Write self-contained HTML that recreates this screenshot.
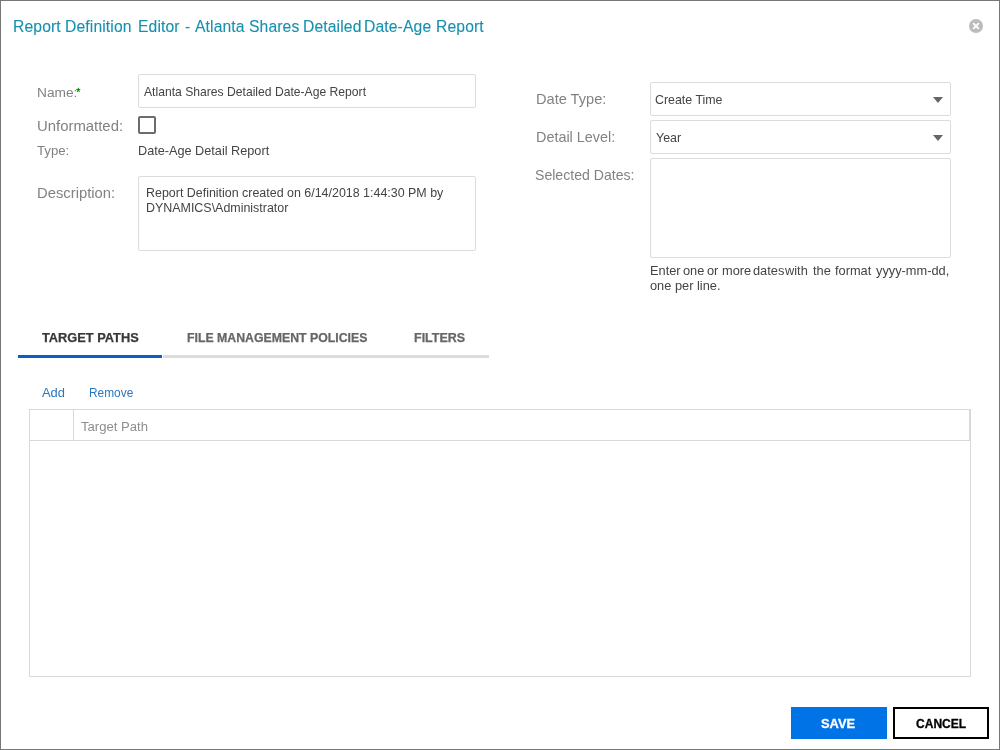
<!DOCTYPE html>
<html>
<head>
<meta charset="utf-8">
<style>
html,body{margin:0;padding:0;background:#fff;}
body{width:1000px;height:750px;position:relative;overflow:hidden;font-family:"Liberation Sans",sans-serif;-webkit-font-smoothing:antialiased;}
.frame{position:absolute;left:0;top:0;width:998px;height:748px;border:1px solid #777;}
.t{position:absolute;white-space:nowrap;line-height:1;will-change:transform;}
.box{position:absolute;box-sizing:border-box;border:1px solid #dcdcdc;border-radius:2px;background:#fff;}
.lbl{color:#828282;font-size:14px;}
.val{color:#444;font-size:12px;}
.tri{position:absolute;width:0;height:0;border-left:5px solid transparent;border-right:5px solid transparent;border-top:6px solid #666;}
.ttl{top:19px;font-size:15.7px;letter-spacing:0.12px;color:#1590ae;-webkit-text-stroke:0.1px #1590ae;}
.hw{top:265px;font-size:12.8px;}
.tab{color:#666;font-weight:bold;font-size:12px;-webkit-text-stroke:0.25px currentColor;}
</style>
</head>
<body>
<div class="frame"></div>

<div class="t ttl" style="left:13.0px;">Report</div><div class="t ttl" style="left:64.6px;">Definition</div><div class="t ttl" style="left:138.4px;">Editor</div><div class="t ttl" style="left:184.8px;">-</div><div class="t ttl" style="left:195px;">Atlanta</div><div class="t ttl" style="left:248.8px;">Shares</div><div class="t ttl" style="left:303.2px;">Detailed</div><div class="t ttl" style="left:364.4px;">Date-Age</div><div class="t ttl" style="left:435.7px;">Report</div>
<svg style="position:absolute;left:969px;top:19px" width="14" height="14" viewBox="0 0 14 14"><circle cx="7" cy="7" r="7" fill="#bbb"/><path d="M4.1 4.1L9.9 9.9M9.9 4.1L4.1 9.9" stroke="#fff" stroke-width="1.9"/></svg>

<!-- left column -->
<div class="t lbl" id="lname" style="left:37px;top:86px;font-size:13.7px;">Name:<span style="color:#008a00;font-size:10.5px;position:relative;top:-1px;left:-1px;-webkit-text-stroke:0.3px #008a00;">*</span></div>
<div class="box" style="left:138px;top:74px;width:338px;height:34px;"></div>
<div class="t val" id="vname" style="left:144px;top:86px;font-size:12.15px;">Atlanta Shares Detailed Date-Age Report</div>

<div class="t lbl" id="lunf" style="left:37px;top:119px;font-size:14.9px;">Unformatted:</div>
<div style="position:absolute;left:138px;top:116px;width:18px;height:18px;box-sizing:border-box;border:2px solid #6c6c6c;border-radius:2px;"></div>

<div class="t lbl" id="ltype" style="left:37px;top:144px;font-size:13.2px;">Type:</div>
<div class="t val" id="vtype" style="left:138px;top:145px;font-size:12.7px;">Date-Age Detail Report</div>

<div class="t lbl" id="ldesc" style="left:37px;top:186px;font-size:14.8px;">Description:</div>
<div class="box" style="left:138px;top:176px;width:338px;height:75px;"></div>
<div class="t val" id="vdesc" style="left:146px;top:186px;font-size:12.45px;line-height:15px;">Report Definition created on 6/14/2018 1:44:30 PM by<br>DYNAMICS\Administrator</div>

<!-- right column -->
<div class="t lbl" id="ldt" style="left:536px;top:92px;font-size:14.6px;">Date Type:</div>
<div class="box" style="left:650px;top:82px;width:301px;height:34px;"></div>
<div class="t val" id="vdt" style="left:655px;top:94px;font-size:12.4px;">Create Time</div>
<div class="tri" style="left:933px;top:97px;"></div>

<div class="t lbl" id="ldl" style="left:536px;top:130px;font-size:14.4px;">Detail Level:</div>
<div class="box" style="left:650px;top:120px;width:301px;height:34px;"></div>
<div class="t val" id="vdl" style="left:656px;top:132px;font-size:12.4px;">Year</div>
<div class="tri" style="left:933px;top:135px;"></div>

<div class="t lbl" id="lsd" style="left:535px;top:168px;font-size:14.1px;">Selected Dates:</div>
<div class="box" style="left:650px;top:158px;width:301px;height:100px;"></div>
<div class="t val hw" style="left:649.8px;">Enter</div><div class="t val hw" style="left:683.0px;">one</div><div class="t val hw" style="left:706.6px;">or</div><div class="t val hw" style="left:721.5px;">more</div><div class="t val hw" style="left:753.0px;">dates</div><div class="t val hw" style="left:785.0px;">with</div><div class="t val hw" style="left:812.6px;">the</div><div class="t val hw" style="left:835.0px;">format</div><div class="t val hw" style="left:875.8px;">yyyy-mm-dd,</div><div class="t val hw" style="left:650px;top:280px;">one per line.</div>

<!-- tabs -->
<div class="t tab" id="tab1" style="left:42px;top:332px;color:#383838;font-size:12.8px;">TARGET PATHS</div>
<div class="t tab" id="tab2" style="left:187px;top:332px;font-size:12.3px;">FILE MANAGEMENT POLICIES</div>
<div class="t tab" id="tab3" style="left:414px;top:332px;font-size:12.5px;">FILTERS</div>
<div style="position:absolute;left:163px;top:355px;width:326px;height:3px;background:#dcdcdc;"></div>
<div style="position:absolute;left:18px;top:355px;width:144px;height:3px;background:#0a5fc4;"></div>

<!-- grid -->
<div class="t" id="add" style="left:42px;top:387px;font-size:12.9px;color:#2a76c0;">Add</div>
<div class="t" id="rem" style="left:89px;top:388px;font-size:11.9px;color:#2a76c0;">Remove</div>

<div class="box" style="left:29px;top:409px;width:942px;height:268px;border-radius:0;border-color:#d9d9d9;"></div>
<div style="position:absolute;left:29px;top:440px;width:942px;height:1px;background:#d9d9d9;"></div>
<div style="position:absolute;left:73px;top:409px;width:1px;height:32px;background:#d9d9d9;"></div>
<div style="position:absolute;left:969px;top:409px;width:1px;height:32px;background:#d9d9d9;"></div>
<div class="t" id="thp" style="left:81px;top:420px;font-size:13.1px;color:#8e8e8e;">Target Path</div>

<!-- buttons -->
<div style="position:absolute;left:791px;top:707px;width:96px;height:32px;background:#0073e7;"></div>
<div class="t" id="save" style="left:821px;top:718px;font-size:12.9px;font-weight:bold;color:#fff;-webkit-text-stroke:0.3px #fff;">SAVE</div>
<div style="position:absolute;left:893px;top:707px;width:96px;height:32px;box-sizing:border-box;border:2px solid #000;"></div>
<div class="t" id="cancel" style="left:916px;top:718px;font-size:12.05px;font-weight:bold;color:#000;-webkit-text-stroke:0.3px #000;">CANCEL</div>

</body>
</html>
